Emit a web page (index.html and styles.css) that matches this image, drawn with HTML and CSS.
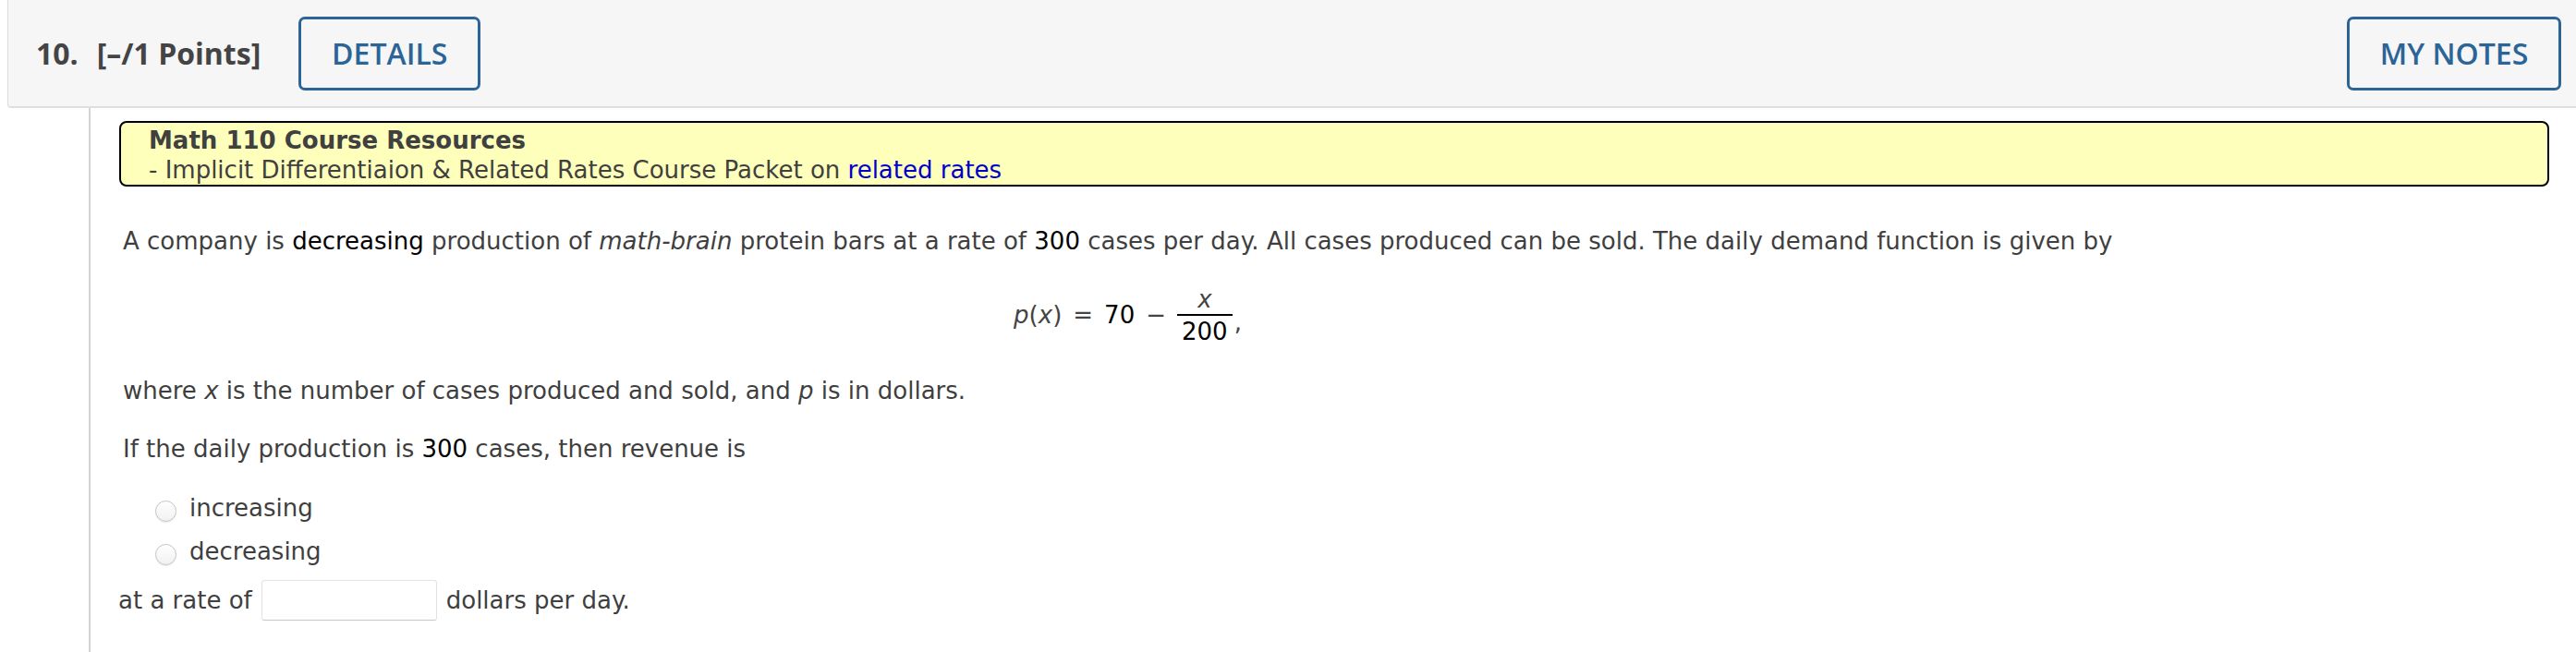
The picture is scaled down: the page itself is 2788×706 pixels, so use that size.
FILE: index.html
```html
<!DOCTYPE html>
<html lang="en">
<head>
<meta charset="utf-8">
<title>Question 10</title>
<link rel="stylesheet" href="styles.css">
</head>
<body>
<div class="question">
  <div class="qhead">
    <span class="qnum">10.</span>
    <span class="qpts">[–/1 Points]</span>
    <button class="qbtn" type="button">DETAILS</button>
    <button class="qbtn qbtn-notes" type="button">MY NOTES</button>
  </div>
  <div class="qbody">
    <div class="resources">
      <div class="res-title">Math 110 Course Resources</div>
      <div class="res-line">- Implicit Differentiaion &amp; Related Rates Course Packet on <a class="res-link" href="#">related rates</a></div>
    </div>
    <div class="prompt">
      <p class="p-intro">A company is <span class="em">decreasing</span> production of <i>math-brain</i> protein bars at a rate of <span class="em">300</span> cases per day. All cases produced can be sold. The daily demand function is given by</p>
      <div class="formula"><span class="mi">p</span>(<span class="mi">x</span>)<span class="mo">=</span><span class="mn">70</span><span class="mo">−</span><span class="frac"><span class="num"><span class="mi">x</span></span><span class="den"><span class="mn">200</span></span></span><span class="comma">,</span></div>
      <p class="p-where">where <i>x</i> is the number of cases produced and sold, and <i>p</i> is in dollars.</p>
      <p class="p-if">If the daily production is <span class="em">300</span> cases, then revenue is</p>
      <div class="choices">
        <label class="choice"><input class="radio" type="radio" name="rev"><span>increasing</span></label>
        <label class="choice"><input class="radio" type="radio" name="rev"><span>decreasing</span></label>
      </div>
      <div class="rate-row"><span>at a rate of</span><input class="answer" type="text"><span>dollars per day.</span></div>
    </div>
  </div>
</div>
</body>
</html>
```
FILE: styles.css
```css
html, body {
  margin: 0;
  padding: 0;
  background: #ffffff;
}

body {
  font-family: "DejaVu Sans", Verdana, sans-serif;
  font-size: 26px;
  line-height: 36px;
  color: #3f3f3f;
}

.question {
  display: flex;
  flex-direction: column;
  min-height: 706px;
}

.qhead {
  display: flex;
  align-items: center;
  height: 115px;
  margin-left: 8px;
  padding-left: 30px;
  padding-right: 16px;
  background: #f6f6f6;
  border-left: 1px solid #dcdcdc;
  border-bottom: 2px solid #dedede;
  border-bottom-left-radius: 4px;
  font-family: "Open Sans", "Liberation Sans", sans-serif;
}

.qnum {
  font-size: 32px;
  font-weight: 700;
  color: #444444;
  margin-right: 20px;
}

.qpts {
  font-size: 32px;
  font-weight: 700;
  color: #444444;
  margin-right: 41px;
}

.qbtn {
  box-sizing: border-box;
  height: 80px;
  width: 197px;
  padding: 0;
  border: 3px solid #2b6497;
  border-radius: 7px;
  background: transparent;
  color: #2b6497;
  font-family: "Open Sans", "Liberation Sans", sans-serif;
  font-size: 32px;
  font-weight: 600;
  line-height: 1;
  cursor: pointer;
}

.qbtn-notes {
  width: 232px;
  margin-left: auto;
}

.qbody {
  flex: 1;
  margin-left: 96px;
  border-left: 2px solid #d4d4d4;
  padding-left: 31px;
  padding-right: 29px;
  padding-top: 14px;
}

.resources {
  box-sizing: content-box;
  height: 64px;
  padding: 3px 30px 0;
  background: #feffba;
  border: 2px solid #000000;
  border-radius: 8px;
  line-height: 32px;
}

.res-title {
  font-weight: 700;
  color: #404040;
}

.res-line {
  color: #404040;
}

.res-link {
  color: #0000cc;
  text-decoration: none;
}

.prompt {
  width: 2163px;
  padding-left: 4px;
}

.prompt p {
  margin: 0;
}

.em {
  color: #000000;
}

.p-intro {
  margin-top: 41px !important;
}

.formula {
  margin-top: 32px;
  padding-left: 12px;
  text-align: center;
  line-height: 36px;
  color: #444444;
}

.mi {
  font-style: italic;
}

.mn {
  color: #000000;
}

.mo {
  margin: 0 12px;
}

.frac {
  display: inline-block;
  vertical-align: -18px;
  text-align: center;
  line-height: 26px;
}

.num {
  display: block;
  padding: 0 5px 3px;
  border-bottom: 2px solid #000000;
}

.den {
  display: block;
  padding: 4px 5px 0;
}

.comma {
  display: inline-block;
  vertical-align: -8px;
  margin-left: 2px;
}

.p-where {
  margin-top: 33px !important;
}

.p-if {
  margin-top: 27px !important;
}

.choices {
  display: flex;
  flex-direction: column;
  gap: 11px;
  margin-top: 28px;
  padding-left: 35px;
}

.choice {
  display: flex;
  align-items: center;
  gap: 14px;
  height: 36px;
}

.radio {
  appearance: none;
  -webkit-appearance: none;
  box-sizing: border-box;
  width: 23px;
  height: 23px;
  margin: 6px 0 0;
  border-radius: 50%;
  border: 1px solid #c4c4c4;
  background: linear-gradient(#ffffff, #f1f1f1);
  box-shadow: 0 1px 1px rgba(0, 0, 0, 0.08);
}

.rate-row {
  display: flex;
  align-items: center;
  gap: 10px;
  margin-top: 13px;
  margin-left: -5px;
}

.answer {
  box-sizing: border-box;
  width: 190px;
  height: 44px;
  margin: 0;
  border: 1px solid #e2e2e2;
  border-bottom-color: #c8c8c8;
  border-radius: 3px;
  background: #ffffff;
  font-family: "DejaVu Sans", Verdana, sans-serif;
  font-size: 22px;
}
```
